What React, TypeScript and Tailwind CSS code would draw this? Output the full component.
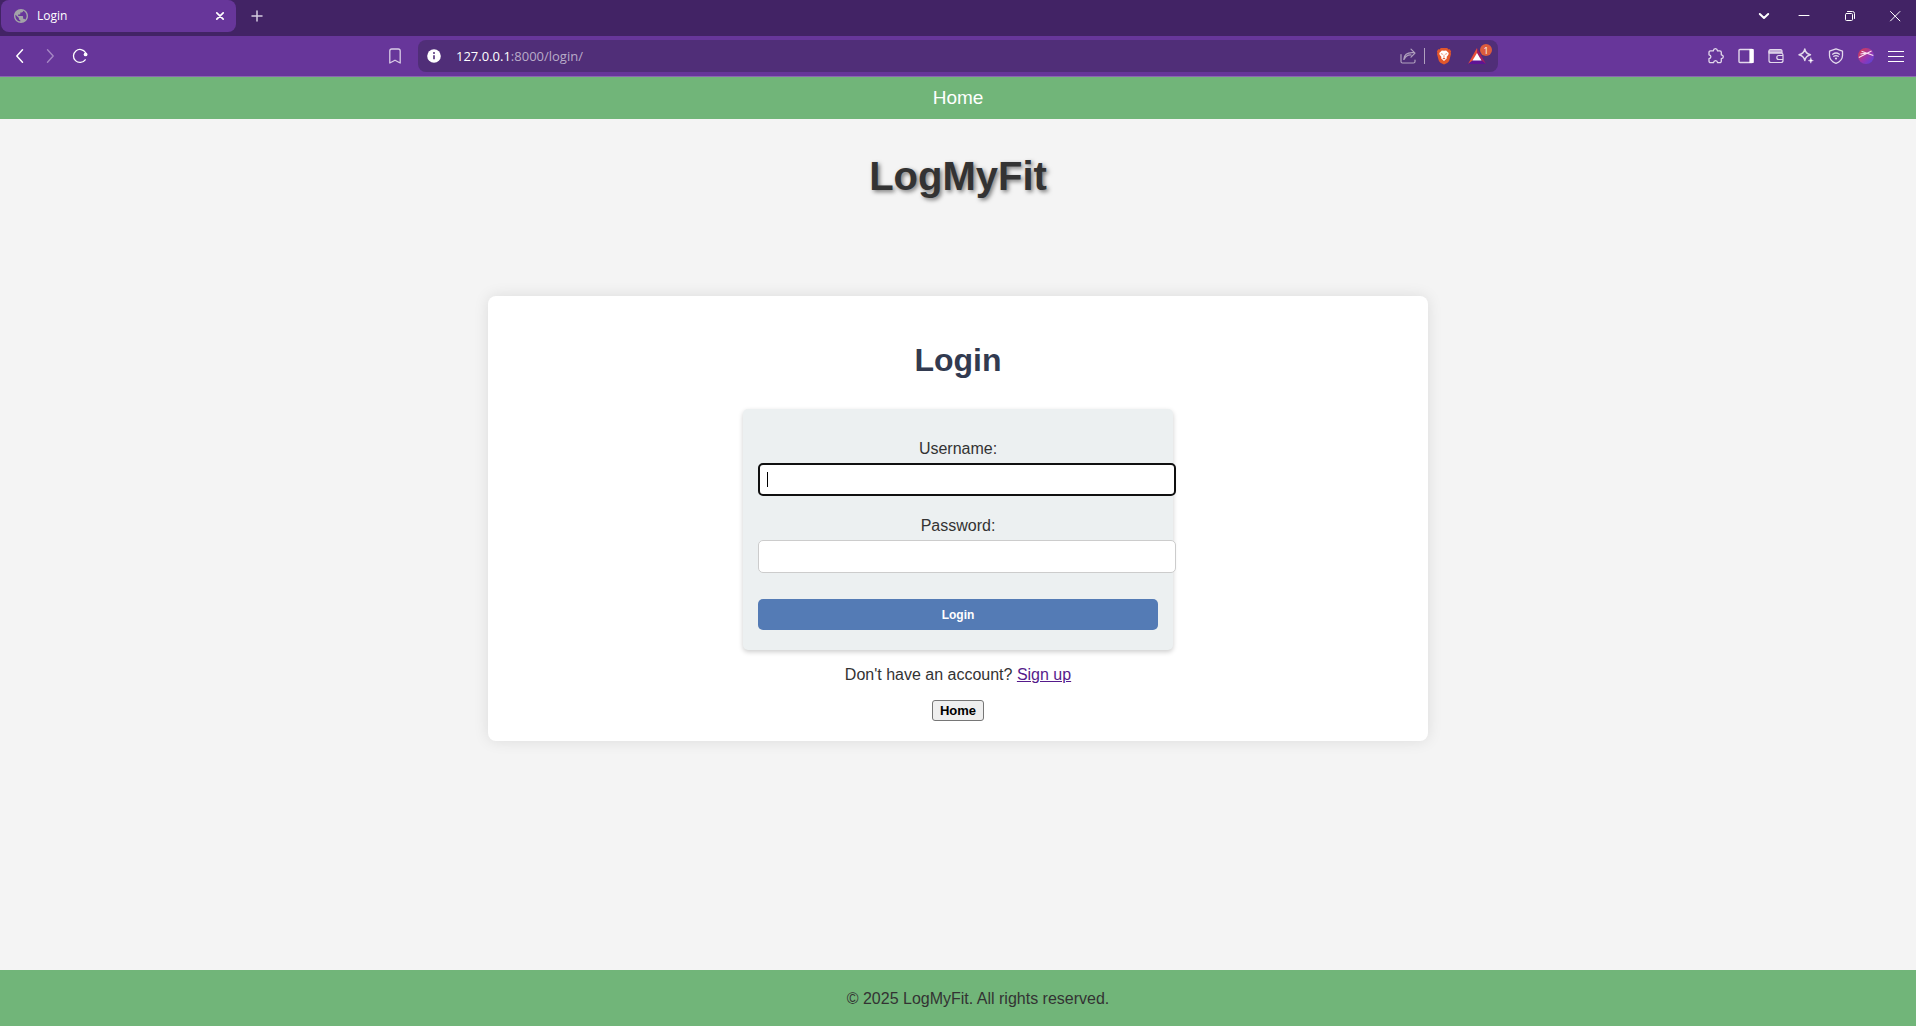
import React from "react";

type IconProps = { className?: string; children: React.ReactNode; box?: string };

function Icon({ className = "", children, box = "0 0 16 16" }: IconProps) {
  return (
    <svg
      viewBox={box}
      className={`size-4 shrink-0 ${className}`}
      fill="none"
      stroke="currentColor"
      strokeWidth="1.2"
      strokeLinecap="round"
      strokeLinejoin="round"
      aria-hidden="true"
    >
      {children}
    </svg>
  );
}

function BarButton({ label, children, className = "" }: { label: string; children: React.ReactNode; className?: string }) {
  return (
    <button type="button" aria-label={label} className={`flex shrink-0 items-center justify-center ${className}`}>
      {children}
    </button>
  );
}

function TabStrip() {
  return (
    <div className="flex h-9 items-start bg-[#422365] text-white">
      <div className="ml-px flex h-8 w-[235px] items-center rounded-lg bg-[#67369a] pr-2 pl-[13px]">
        <svg viewBox="2 2 20 20" className="mr-[9px] size-3.5 shrink-0" aria-hidden="true">
          <path
            d="M12 2C6.48 2 2 6.48 2 12s4.48 10 10 10 10-4.48 10-10S17.52 2 12 2zm-1 17.930c-3.950-.490-7-3.850-7-7.930 0-.620.080-1.210.210-1.790L9 15v1c0 1.100.900 2 2 2v1.930zm6.900-2.540c-.260-.810-1-1.390-1.900-1.390h-1v-3c0-.550-.450-1-1-1H8v-2h2c.550 0 1-.450 1-1V7h2c1.100 0 2-.900 2-2v-.410c2.930 1.190 5 4.060 5 7.410 0 2.080-.800 3.970-2.100 5.390z"
            fill="#a3a3a8"
          />
        </svg>
        <span className="grow text-xs">Login</span>
        <BarButton label="Close tab" className="size-4">
          <Icon>
            <path d="M4.8 4.8l6.4 6.4M11.2 4.8l-6.4 6.4" strokeWidth="1.7" />
          </Icon>
        </BarButton>
      </div>
      <BarButton label="New tab" className="ml-[13px] h-8 w-4 text-[#d5cbe0]">
        <Icon>
          <path d="M8 3v10M3 8h10" strokeWidth="1.5" />
        </Icon>
      </BarButton>
      <div className="ml-auto flex h-8">
        <BarButton label="Search tabs" className="w-9">
          <Icon>
            <path d="M3.8 6 8 10l4.2-4" strokeWidth="2" />
          </Icon>
        </BarButton>
        <BarButton label="Minimize" className="w-11">
          <Icon>
            <path d="M3 7.5h10" strokeWidth="1" />
          </Icon>
        </BarButton>
        <BarButton label="Restore" className="w-12">
          <Icon>
            <rect x="3.5" y="5.5" width="7" height="7" rx="1" strokeWidth="1" />
            <path d="M5.5 3.5h5a2 2 0 0 1 2 2v5" strokeWidth="1" />
          </Icon>
        </BarButton>
        <BarButton label="Close" className="w-[42px]">
          <Icon>
            <path d="M3.5 3.5l9.4 9.4M12.9 3.5l-9.4 9.4" strokeWidth="1" />
          </Icon>
        </BarButton>
      </div>
    </div>
  );
}

function AddressBar() {
  return (
    <div className="flex h-8 w-[1080px] shrink items-center rounded-lg bg-[#502e78] pr-3 pl-2">
      <svg viewBox="0 0 16 16" className="size-4 shrink-0" aria-hidden="true">
        <circle cx="8" cy="8" r="6.8" fill="#fff" />
        <path d="M8 7.2v4" stroke="#502e78" strokeWidth="1.6" />
        <circle cx="8" cy="4.9" r="1" fill="#502e78" />
      </svg>
      <div className="ml-3.5 grow pt-0.5 text-[13px] text-[#b9abc9]">
        <span className="text-white">127.0.0.1</span>:8000/login/
      </div>
      <BarButton label="Share" className="text-[#b0a1be]">
        <Icon>
          <path d="M1 6.500v7a1.500 1.500 0 0 0 1.500 1.500h11a1.500 1.500 0 0 0 1.500-1.500V12" />
          <path d="M3.800 11.500C4 7.200 6.600 4.200 13.500 4.700M4.200 11.200c1.500-3 4-4.500 7-4.200M11 1.200l4 4-4 4" />
        </Icon>
      </BarButton>
      <span className="ml-2 h-4 w-px bg-[#b0a1be]" />
      <BarButton label="Brave Shields" className="ml-[11px]">
        <svg viewBox="0 0 18 20" className="h-[18px] w-4" aria-hidden="true">
          <path d="M5.500 1h7l1.700 1.700 1.400-.2L17 5l-.5 1.300.4 1.500-1.900 7c-.5 1.500-1.400 2.300-2.500 3L9 19.500l-3.500-1.700c-1.100-.7-2-1.500-2.500-3l-1.900-7 .4-1.500L1 5l1.400-2.500 1.400.2z" fill="#e2572b" />
          <path d="M9 4.200l2.400-.5 2.900 2.800-.4 2-2 2.600.4 1.500L9 15.500l-3.300-2.900.4-1.500-2-2.600-.4-2 2.900-2.800z" fill="#fff" />
          <path d="M5.200 7l2.200.5-.2 1.400zM12.800 7l-2.200.5.2 1.400zM9 7.500l.5 3L9 11.300l-.5-.8zM7.300 12.600 9 11.700l1.700.9L9 13.800z" fill="#e2572b" />
        </svg>
      </BarButton>
      <BarButton label="Brave Rewards, 1 new" className="relative ml-4">
        <svg viewBox="0 0 18 16" className="h-4 w-[18px]" aria-hidden="true">
          <path d="M9 0v6L5.500 12 0 16z" fill="#e8503a" />
          <path d="M9 0l9 16-5.500-4L9 6z" fill="#9e1f63" />
          <path d="M0 16h18l-5.500-4h-7z" fill="#5e1494" />
          <path d="M9 5l4.500 7.500h-9z" fill="#fff" />
        </svg>
        <span className="absolute -top-1 left-3 flex size-3 items-center justify-center rounded-full bg-[#dc5c3c] text-[9px] leading-none text-white">
          1
        </span>
      </BarButton>
    </div>
  );
}

function Toolbar() {
  return (
    <div className="flex h-[41px] items-center border-b border-[#8a68b0] bg-[#67369a] text-white">
      <div className="flex flex-1 items-center pl-3">
        <BarButton label="Back">
          <Icon><path d="M10.500 1.800 4.800 8l5.700 6.200" strokeWidth="1.500" /></Icon>
        </BarButton>
        <BarButton label="Forward" className="ml-3.5 text-[#a586c4]">
          <Icon><path d="M5.500 1.800 11.200 8l-5.700 6.200" strokeWidth="1.400" /></Icon>
        </BarButton>
        <BarButton label="Reload" className="ml-3.5">
          <Icon>
            <path d="M13.200 11.800A6.500 6.500 0 1 1 13.500 4.500" strokeWidth="1.300" />
            <circle cx="13.600" cy="6.400" r="1.900" fill="currentColor" stroke="none" />
          </Icon>
        </BarButton>
        <BarButton label="Bookmark this tab" className="mr-[15px] ml-auto text-[#d9cce6]">
          <Icon><path d="M2.800 15V3a2 2 0 0 1 2-2h6.400a2 2 0 0 1 2 2v12L8 12.200z" strokeWidth="1.300" /></Icon>
        </BarButton>
      </div>
      <AddressBar />
      <div className="flex flex-1 items-center justify-end gap-3.5 pr-3 text-[#e3d9ec]">
        <BarButton label="Extensions">
          <Icon>
            <path d="M2.500 2.800h2.800C5.500 1.300 6.400.7 7.400.7s1.900.6 2.100 2.100h2.300a1.500 1.500 0 0 1 1.500 1.500v2.500c1.300.2 2 .9 2 1.900s-.7 1.800-2 2v2.500a1.500 1.500 0 0 1-1.500 1.500H9.600c-.2-1.400-1-2.100-2-2.100s-1.900.7-2.100 2.100H2.500A1.500 1.500 0 0 1 1 13.200v-2.600c1.300-.2 1.900-.9 1.900-1.900S2.300 7 1 6.800V4.300a1.500 1.500 0 0 1 1.500-1.500z" strokeWidth="1.300" />
          </Icon>
        </BarButton>
        <BarButton label="Sidebar">
          <Icon>
            <rect x="1" y="1.500" width="14" height="13" rx="1" strokeWidth="1.400" />
            <path d="M12 1.500h3v13h-3z" fill="#fff" stroke="#fff" />
          </Icon>
        </BarButton>
        <BarButton label="Wallet">
          <Icon>
            <path d="M1 3a1.500 1.500 0 0 1 1.500-1.500h10A1.500 1.500 0 0 1 14 3v2H1z" fill="#c2abd6" />
            <path d="M1 3v9.500a2 2 0 0 0 2 2h10a2 2 0 0 0 2-2V7a2 2 0 0 0-2-2H1M15 7.500h-4.200a2 2 0 0 0 0 4H15" />
          </Icon>
        </BarButton>
        <BarButton label="Leo AI">
          <Icon>
            <path d="M6.800 1c.7 3.600 2 5 5.700 5.800-3.700.8-5 2.200-5.700 5.800C6 9 4.600 7.600 1 6.800 4.600 6 6 4.600 6.800 1z" strokeWidth="1.400" />
            <path d="M12.800 10c.3 1.700.8 2.300 2.500 2.600-1.700.3-2.200.9-2.500 2.600-.3-1.700-.8-2.300-2.500-2.600 1.700-.3 2.200-.9 2.500-2.600z" fill="#fff" strokeWidth=".6" />
          </Icon>
        </BarButton>
        <BarButton label="VPN">
          <Icon>
            <path d="M8 .8l6.500 2.400v4.300c0 3.700-2.600 6.300-6.500 7.900C4.100 13.800 1.500 11.200 1.500 7.500V3.200z" strokeWidth="1.300" />
            <path d="M4.600 6.200c2.100-1.500 4.700-1.500 6.800 0M5.800 8.300c1.400-.9 3-.9 4.400 0" strokeWidth="1.300" />
            <circle cx="8" cy="10.500" r="1.100" fill="currentColor" stroke="none" />
          </Icon>
        </BarButton>
        <BarButton label="Profile">
          <svg viewBox="0 0 16 16" className="size-4" aria-hidden="true">
            <defs>
              <linearGradient id="avatar" x1="0" y1="0" x2="1" y2="1">
                <stop offset="0.2" stopColor="#c93a66" />
                <stop offset="0.55" stopColor="#9836b0" />
                <stop offset="1" stopColor="#4e46e0" />
              </linearGradient>
            </defs>
            <circle cx="8" cy="8" r="8" fill="url(#avatar)" />
            <path d="M.8 9.500 13.500 3M3.500 3.200l11.800 4.300M2.500 6l6-1" stroke="#fbdff0" strokeWidth="1.100" />
          </svg>
        </BarButton>
        <BarButton label="Menu" className="text-white">
          <Icon><path d="M.5 3.500h15M.5 8.500h15M.5 13.500h15" strokeWidth="1.200" /></Icon>
        </BarButton>
      </div>
    </div>
  );
}

function LoginForm() {
  return (
    <form
      className="mx-auto w-[430px] rounded-[5px] bg-[#ecf0f1] px-[15px] pt-7 pb-5 shadow-[0_2px_5px_rgba(0,0,0,0.2)]"
      onSubmit={(e) => e.preventDefault()}
    >
      <label htmlFor="username" className="block leading-6">Username:</label>
      <div className="relative mt-0.5 w-[418px]">
        <input
          id="username"
          type="text"
          className="block h-[33px] w-full rounded-[5px] border-2 border-[#101010] bg-white px-2 text-[13px] caret-transparent outline-none"
        />
        <span className="absolute top-[9px] left-[9px] h-[15px] w-px bg-black" />
      </div>
      <label htmlFor="password" className="mt-[18px] block leading-6">Password:</label>
      <input
        id="password"
        type="password"
        className="mt-0.5 block h-[33px] w-[418px] rounded-[5px] border border-[#cccccc] bg-white px-2 text-[13px]"
      />
      <button type="submit" className="mt-[26px] block h-[31px] w-full rounded-[5px] bg-[#547bb5] text-xs font-bold text-white">
        Login
      </button>
    </form>
  );
}

export default function App() {
  return (
    <div className="flex min-h-screen flex-col bg-[#f4f4f4] font-['Liberation_Sans',Arial,sans-serif] text-base text-[#333333]">
      <header className="font-['Open_Sans','Noto_Sans',sans-serif]">
        <TabStrip />
        <Toolbar />
      </header>
      <nav className="flex h-[42px] items-center justify-center bg-[#71b579]">
        <a href="#home" className="text-[19px] text-white">Home</a>
      </nav>
      <main className="grow px-5 text-center">
        <h1 className="mt-[33px] text-[40px] leading-[48px] font-bold [text-shadow:2px_2px_4px_rgba(0,0,0,0.5)]">LogMyFit</h1>
        <section className="mx-auto mt-24 max-w-[940px] rounded-lg bg-white pt-11 pb-5 shadow-[0_0_15px_rgba(0,0,0,0.1)]">
          <h2 className="mb-[29px] text-[32px] leading-10 font-bold text-[#323a50]">Login</h2>
          <LoginForm />
          <p className="mt-3 leading-[26px]">
            Don't have an account? <a href="#signup" className="text-[#551a8b] underline">Sign up</a>
          </p>
          <button type="button" className="mx-auto mt-3 block h-[21px] rounded-[3px] border border-[#767676] bg-[#efefef] px-[7px] text-[13px] leading-none font-bold text-black">
            Home
          </button>
        </section>
      </main>
      <footer className="flex h-14 items-center justify-center bg-[#71b579] pt-0.5 pl-10">
        <p>© 2025 LogMyFit. All rights reserved.</p>
      </footer>
    </div>
  );
}
